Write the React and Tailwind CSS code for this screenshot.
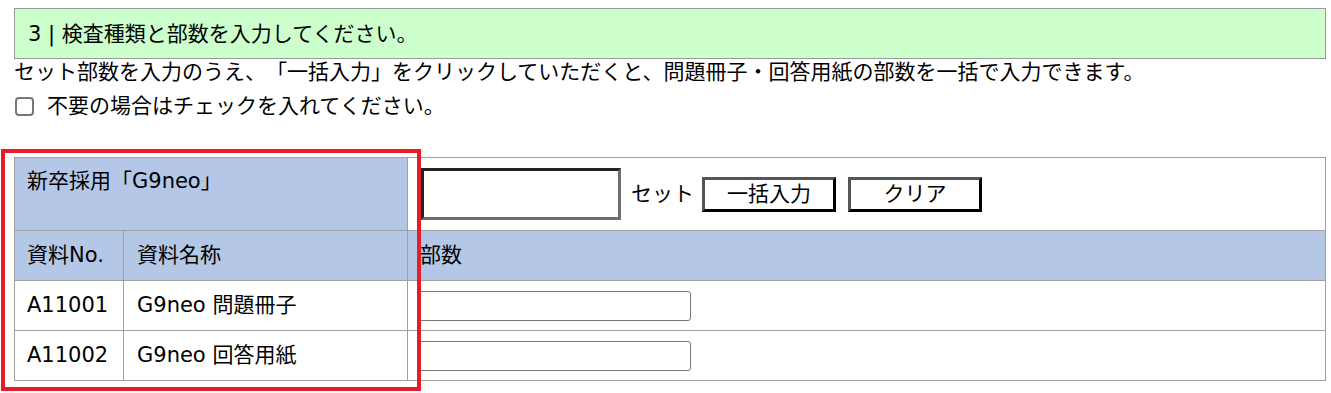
export default function App() {
  const font = { fontFamily: '"DejaVu Sans", "Noto Sans CJK JP", sans-serif' };
  return (
    <div className="relative w-[1331px] h-[393px] bg-white text-black text-[21px] [text-spacing-trim:space-all]" style={font}>
      <div className="pt-[8px] pl-[14px] pr-[5px]">
        <div className="h-[51px] border border-[#999999] bg-[#ccffcc] flex items-center pl-[13px] leading-[30px]">
          3 | 検査種類と部数を入力してください。
        </div>
        <div className="leading-[26px] h-[26px] whitespace-nowrap">
          セット部数を入力のうえ、「一括入力」をクリックしていただくと、問題冊子・回答用紙の部数を一括で入力できます。
        </div>
        <div className="mt-[4px] h-[34px] flex items-center">
          <span className="shrink-0 ml-[1px] w-[19px] h-[19px] border-2 border-[#767676] rounded-[4px] bg-white"></span>
          <span className="ml-[13px] leading-[30px]">不要の場合はチェックを入れてください。</span>
        </div>

        <div className="mt-[34px] w-[1312px] border border-[#a0a0a0] grid grid-cols-[108px_284px_918px]">
          <div className="col-span-2 h-[72px] bg-[#b4c7e7] pl-[12px] pt-[8px] leading-[30px]">新卒採用「G9neo」</div>
          <div className="h-[72px] border-l border-[#a0a0a0] flex items-center pl-[13px]">
            <div className="shrink-0 w-[200px] h-[52px] border-[3px] border-t-[#222222] border-l-[#222222] border-r-[#6f6f6f] border-b-[#6f6f6f] bg-white"></div>
            <span className="ml-[10px] leading-[30px]">セット</span>
            <button className="shrink-0 ml-[8px] w-[134px] h-[35px] border-[3px] border-t-[#555555] border-l-[#555555] border-r-black border-b-black bg-white flex items-center justify-center leading-[28px]">一括入力</button>
            <button className="shrink-0 ml-[12px] w-[134px] h-[35px] border-[3px] border-t-[#555555] border-l-[#555555] border-r-black border-b-black bg-white flex items-center justify-center leading-[28px]">クリア</button>
          </div>

          <div className="h-[50px] border-t border-[#a0a0a0] bg-[#b4c7e7] flex items-center pl-[12px]">資料No.</div>
          <div className="h-[50px] border-t border-l border-[#a0a0a0] bg-[#b4c7e7] flex items-center pl-[13px]">資料名称</div>
          <div className="h-[50px] border-t border-l border-[#a0a0a0] bg-[#b4c7e7] flex items-center pl-[12px]">部数</div>

          <div className="h-[50px] border-t border-[#a0a0a0] flex items-center pl-[12px]">A11001</div>
          <div className="h-[50px] border-t border-l border-[#a0a0a0] flex items-center pl-[13px]">G9neo 問題冊子</div>
          <div className="h-[50px] border-t border-l border-[#a0a0a0] flex items-center pl-[10px]">
            <div className="w-[273px] h-[30px] border border-[#767676] rounded-[3px] bg-white"></div>
          </div>

          <div className="h-[50px] border-t border-[#a0a0a0] flex items-center pl-[12px]">A11002</div>
          <div className="h-[50px] border-t border-l border-[#a0a0a0] flex items-center pl-[13px]">G9neo 回答用紙</div>
          <div className="h-[50px] border-t border-l border-[#a0a0a0] flex items-center pl-[10px]">
            <div className="w-[273px] h-[30px] border border-[#767676] rounded-[3px] bg-white"></div>
          </div>
        </div>
      </div>

      <div className="absolute left-[1px] top-[149px] w-[420px] h-[242px] border-4 border-[#e81c24] pointer-events-none"></div>
    </div>
  );
}
